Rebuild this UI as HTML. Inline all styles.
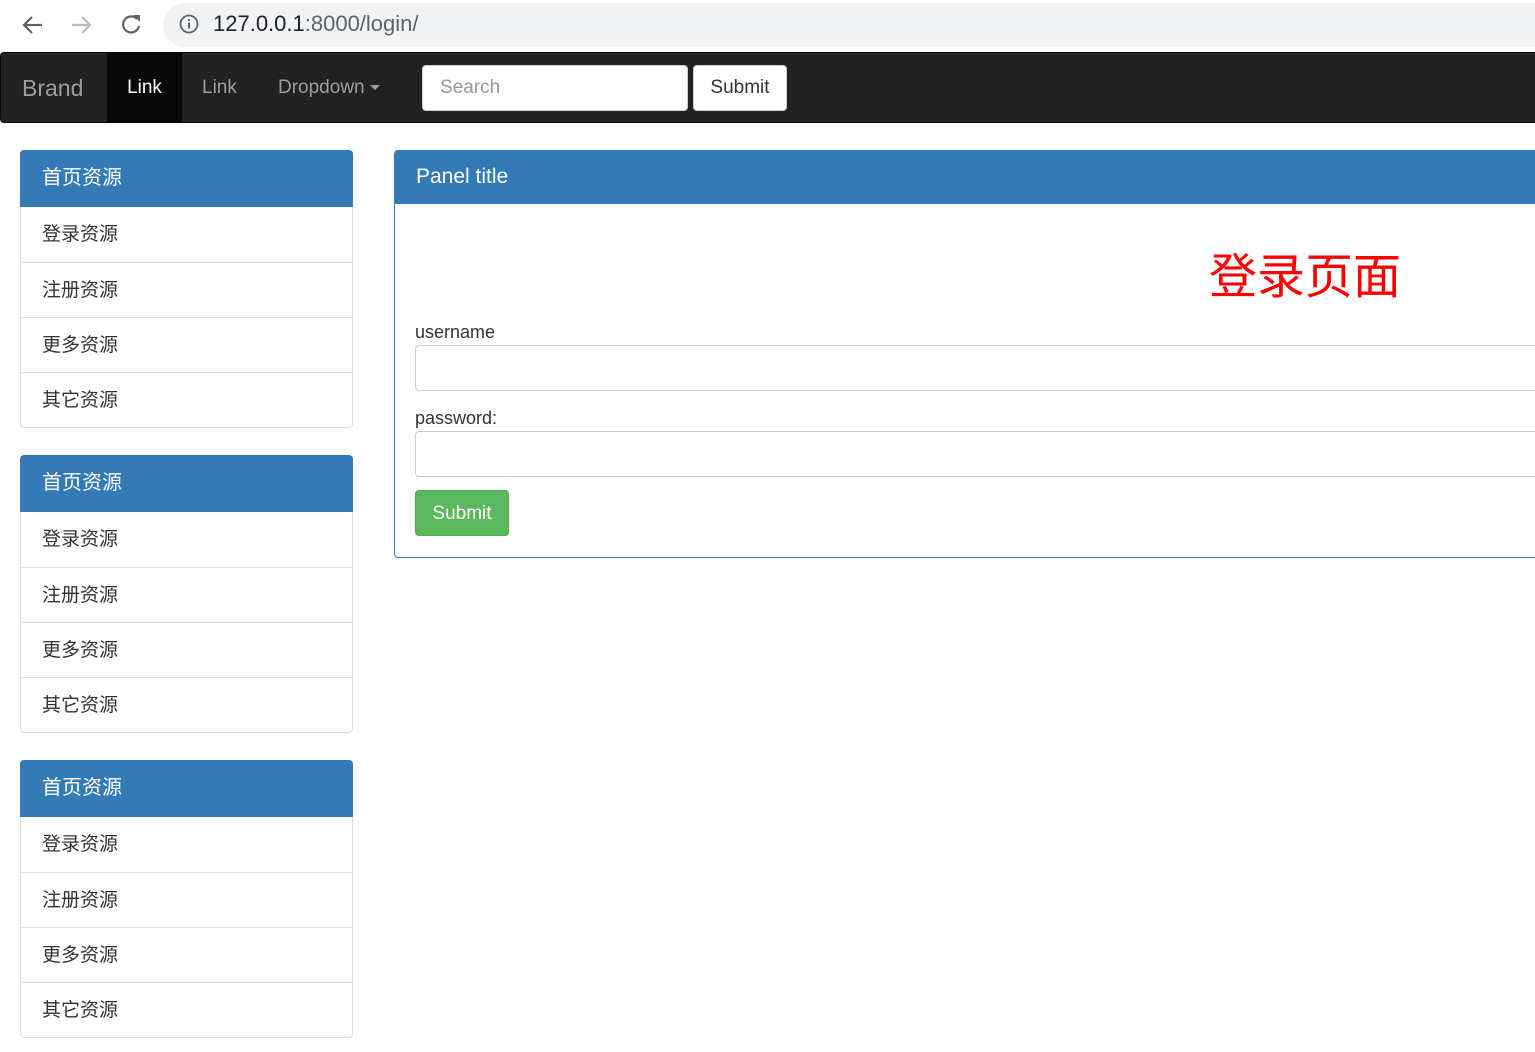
<!DOCTYPE html>
<html><head><meta charset="utf-8"><style>
*{box-sizing:border-box;margin:0;padding:0}
body{width:1535px;height:1052px;overflow:hidden;background:#fff;font-family:"Liberation Sans","Noto Sans CJK SC",sans-serif;color:#333;position:relative}
.abs{position:absolute}
.chrome{left:0;top:0;width:1535px;height:52px;background:#fff}
.pill{left:163px;top:3px;width:1400px;height:44px;border-radius:22px;background:#f1f3f4}
.url{left:213px;top:11px;font-size:22px;color:#202124}
.url span{color:#5f6368}
.nav{left:0;top:52px;width:1545px;height:71px;background:#222;border:1px solid #080808;border-radius:4px}
.nav a{position:absolute;top:0;height:69px;line-height:69px;color:#9d9d9d;font-size:19px}
.in{background:#fff;border:1px solid #ccc;border-radius:4px;position:absolute}
.panel{position:absolute;border:1px solid #ddd;border-radius:4px;background:#fff}
.ph{background:#337ab7;color:#fff;font-size:20px;padding-left:21px;margin:-1px -1px 0;border-radius:4px 4px 0 0;height:57px;line-height:57px;padding-left:22px}
.it{height:55px;line-height:55px;border-top:1px solid #ddd;padding-left:21px;font-size:19px}
.ph+.it{border-top:0}
</style></head><body>
<div class="abs chrome"></div>
<svg class="abs" style="left:20px;top:12px" width="130" height="26" viewBox="0 0 130 26">
<path d="M22 13H4M12 5l-8 8 8 8" stroke="#5f6368" stroke-width="2.2" fill="none"/>
<path d="M52 13h18M62 5l8 8-8 8" stroke="#bbb" stroke-width="2.2" fill="none"/>
<path d="M117 7a8 8 0 1 0 2 7" stroke="#5f6368" stroke-width="2.2" fill="none"/><path d="M113 3h7v7z" fill="#5f6368"/>
</svg>
<div class="abs pill"></div>
<svg class="abs" style="left:179px;top:14px" width="20" height="20"><circle cx="10" cy="10" r="8.5" stroke="#5f6368" stroke-width="1.8" fill="none"/><rect x="9" y="8.5" width="2" height="6" fill="#5f6368"/><rect x="9" y="5" width="2" height="2" fill="#5f6368"/></svg>
<div class="abs url">127.0.0.1<span>:8000/login/</span></div>
<div class="abs nav">
<a style="left:21px;font-size:23px;top:1px">Brand</a>
<a style="left:106px;width:75px;background:#080808;color:#fff;text-align:center">Link</a>
<a style="left:201px">Link</a>
<a style="left:277px">Dropdown <span style="display:inline-block;border-top:5px solid #9d9d9d;border-left:5px solid transparent;border-right:5px solid transparent;vertical-align:middle"></span></a>
<div class="in" style="left:421px;top:12px;width:266px;height:46px;line-height:44px;padding-left:17px;color:#999;font-size:19px">Search</div>
<div class="in" style="left:692px;top:12px;width:94px;height:46px;line-height:44px;text-align:center;color:#333;font-size:19px">Submit</div>
</div>

<div class="panel" style="left:20px;top:150px;width:333px;height:278px"><div class="ph">首页资源</div><div class="it">登录资源</div><div class="it">注册资源</div><div class="it">更多资源</div><div class="it">其它资源</div></div>
<div class="panel" style="left:20px;top:455px;width:333px;height:278px"><div class="ph">首页资源</div><div class="it">登录资源</div><div class="it">注册资源</div><div class="it">更多资源</div><div class="it">其它资源</div></div>
<div class="panel" style="left:20px;top:760px;width:333px;height:278px"><div class="ph">首页资源</div><div class="it">登录资源</div><div class="it">注册资源</div><div class="it">更多资源</div><div class="it">其它资源</div></div>

<div class="panel" style="left:394px;top:150px;width:1160px;height:408px;border-color:#337ab7;overflow:hidden">
<div style="background:#337ab7;color:#fff;font-size:21px;padding-left:21px;height:53px;line-height:52px">Panel title</div>
</div>
<div class="abs" style="left:1209px;top:248px;font-size:48px;color:#f00;line-height:60px">登录页面</div>
<div class="abs" style="left:415px;top:322px;font-size:18px">username</div>
<div class="in" style="left:415px;top:345px;width:1140px;height:46px"></div>
<div class="abs" style="left:415px;top:408px;font-size:18px">password:</div>
<div class="in" style="left:415px;top:431px;width:1140px;height:46px"></div>
<div class="abs" style="left:415px;top:490px;width:94px;height:46px;background:#5cb85c;border:1px solid #4cae4c;border-radius:4px;color:#fff;font-size:19px;line-height:46px;text-align:center">Submit</div>
</body></html>
